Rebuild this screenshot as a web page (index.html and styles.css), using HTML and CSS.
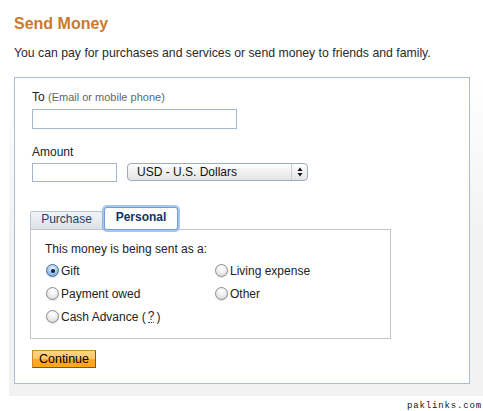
FILE: index.html
```html
<!DOCTYPE html>
<html>
<head>
<meta charset="utf-8">
<title>Send Money</title>
<link rel="stylesheet" href="styles.css">
</head>
<body>
<div class="page">
  <h1 class="title">Send Money</h1>
  <p class="intro">You can pay for purchases and services or send money to friends and family.</p>
  <div class="frame">
    <div class="card">
      <label class="field-label">To <span class="hint">(Email or mobile phone)</span></label>
      <input class="text-input to-input" type="text">
      <label class="field-label amount-label">Amount</label>
      <div class="amount-row">
        <input class="text-input amount-input" type="text">
        <div class="select">
          <span class="select-text">USD - U.S. Dollars</span>
          <span class="select-arrows">
            <svg width="6" height="10" viewBox="0 0 6 10"><path d="M3 0.5 L5.5 4 H0.5 Z" fill="#111"/><path d="M0.5 6 H5.5 L3 9.5 Z" fill="#111"/></svg>
          </span>
        </div>
      </div>
      <div class="tabs">
        <span class="tab">Purchase</span>
        <span class="tab tab-active">Personal</span>
      </div>
      <div class="panel">
        <p class="panel-text">This money is being sent as a:</p>
        <div class="options">
          <label class="option"><input class="radio" type="radio" name="t" checked>Gift</label>
          <label class="option"><input class="radio" type="radio" name="t">Living expense</label>
          <label class="option"><input class="radio" type="radio" name="t">Payment owed</label>
          <label class="option"><input class="radio" type="radio" name="t">Other</label>
          <label class="option"><input class="radio" type="radio" name="t">Cash Advance (<span class="help">?</span>)</label>
        </div>
      </div>
      <button class="continue" type="button">Continue</button>
    </div>
  </div>
  <div class="watermark">paklinks.com</div>
</div>
</body>
</html>
```
FILE: styles.css
```css
* { box-sizing: border-box; }
body {
  margin: 0;
  font-family: "Liberation Sans", Arial, sans-serif;
  color: #222;
  background: #fff;
}
.page {
  width: 483px;
  height: 411px;
  overflow: hidden;
}
.title {
  margin: 14px 0 11px 14px;
  font-size: 16px;
  line-height: 20px;
  font-weight: bold;
  color: #c97a30;
}
.intro {
  margin: 0 0 16px 14px;
  font-size: 12.25px;
  line-height: 16px;
  color: #2a2a2a;
}
.frame {
  margin-left: 9px;
  padding: 0 13px 12px 5px;
  background: linear-gradient(#ffffff 0%, #f2f2f3 50%, #f2f2f3 100%);
}
.card {
  border: 1px solid #a9bdd6;
  background: #fff;
  padding: 11px 0 15px 15px;
}
.field-label {
  display: block;
  margin-left: 2px;
  font-size: 12px;
  line-height: 16px;
  color: #222;
}
.hint {
  font-size: 11px;
  color: #666;
}
.text-input {
  border: 1px solid #a5b7ce;
  background: #fff;
  padding: 0;
  margin: 0;
  font: inherit;
}
.to-input {
  display: block;
  margin: 4px 0 0 2px;
  width: 205px;
  height: 20px;
}
.amount-label {
  margin-top: 15px;
}
.amount-row {
  display: flex;
  align-items: flex-start;
  gap: 10px;
  margin: 3px 0 0 2px;
  height: 19px;
}
.amount-input {
  width: 85px;
  height: 19px;
}
.select {
  display: flex;
  align-items: stretch;
  width: 181px;
  height: 18px;
  border: 1px solid #9eabbd;
  border-radius: 4px;
  background: linear-gradient(#fefefe, #e4e4e4);
  font-size: 12px;
  color: #111;
}
.select-text {
  flex: 1;
  padding-left: 9px;
  line-height: 16px;
}
.select-arrows {
  width: 16px;
  border-left: 1px solid #c8ced7;
  display: flex;
  align-items: center;
  justify-content: center;
}
.tabs {
  display: flex;
  align-items: flex-end;
  margin-top: 25px;
  height: 22px;
}
.tab {
  width: 73px;
  height: 18px;
  padding: 0 0 3px;
  text-align: center;
  font-size: 12px;
  line-height: 14px;
  color: #1e3f6b;
  border: 1px solid #b9c3ce;
  border-bottom: none;
  border-radius: 2px 2px 0 0;
  background: linear-gradient(#f1f4f7, #dde2e8);
}
.tab-active {
  position: relative;
  z-index: 1;
  width: 74px;
  height: 23px;
  margin: 0 0 -1px 1px;
  padding: 2px 0 4px;
  font-weight: bold;
  color: #0f3463;
  border: 1px solid #6f9fd8;
  border-radius: 3px;
  background: #fff;
  box-shadow: 0 0 0 2px rgba(135, 180, 232, 0.75);
}
.panel {
  width: 361px;
  height: 110px;
  border: 1px solid #c6c6c6;
  padding: 11px 0 0 14px;
}
.panel-text {
  margin: 0;
  font-size: 12px;
  line-height: 16px;
  color: #222;
}
.options {
  display: grid;
  grid-template-columns: 169px auto;
  grid-auto-rows: 23px;
  margin-top: 2px;
}
.option {
  display: flex;
  align-items: center;
  gap: 2px;
  font-size: 12px;
  color: #222;
}
.radio {
  -webkit-appearance: none;
  appearance: none;
  width: 13px;
  height: 13px;
  margin: 0 0 0 1px;
  border: 1px solid #8c8c8c;
  border-radius: 50%;
  background: radial-gradient(circle at 50% 30%, #ffffff 0%, #f2f2f2 40%, #cfcfcf 100%);
  box-shadow: 0 1px 1px rgba(0, 0, 0, 0.12);
  display: grid;
  place-items: center;
}
.radio:checked {
  border-color: #4d6f99;
  background: radial-gradient(circle at 50% 30%, #e3f0fc 0%, #a9cdf2 45%, #5b97d8 100%);
}
.radio:checked::after {
  content: "";
  width: 4px;
  height: 4px;
  border-radius: 50%;
  background: #10203a;
}
.help {
  border-bottom: 1px dotted #1f4f8f;
  line-height: 12px;
}
.continue {
  display: block;
  margin: 11px 0 0 2px;
  width: 64px;
  height: 18px;
  padding: 0;
  font-family: "Liberation Sans", Arial, sans-serif;
  font-size: 12.5px;
  line-height: 16px;
  color: #000;
  border: 1px solid #c98a2e;
  border-right-color: #8c5410;
  border-bottom-color: #8c5410;
  border-radius: 0;
  background: linear-gradient(#ffd486 0%, #ffc665 50%, #ffa722 51%, #ffa51e 100%);
}
.watermark {
  margin-top: 5px;
  padding-right: 1px;
  text-align: right;
  font-family: "Liberation Mono", "DejaVu Sans Mono", monospace;
  font-size: 9px;
  line-height: 11px;
  letter-spacing: 0.85px;
  color: #111;
}
```
